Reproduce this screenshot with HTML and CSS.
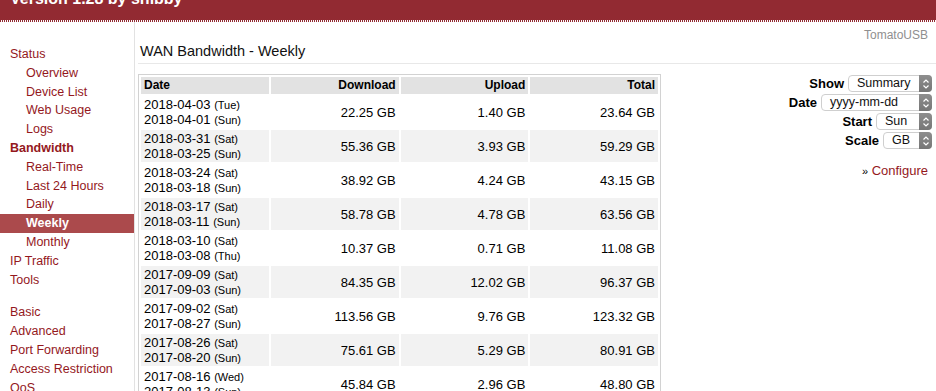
FILE: index.html
```html
<!DOCTYPE html>
<html>
<head>
  <meta charset="UTF-8" />
  <title>WAN Bandwidth - Weekly</title>
  <link rel="stylesheet" href="styles.css">
</head>
<body>
  <div class="header">
    <h1>Version 1.28 by shibby</h1>
  </div>
  <div class="dots"></div>

  <div class="page">
    <ul class="nav">
      <li class="top"><a href="#">Status</a></li>
      <li class="sub"><a href="#">Overview</a></li>
      <li class="sub"><a href="#">Device List</a></li>
      <li class="sub"><a href="#">Web Usage</a></li>
      <li class="sub"><a href="#">Logs</a></li>
      <li class="top open"><a href="#">Bandwidth</a></li>
      <li class="sub"><a href="#">Real-Time</a></li>
      <li class="sub"><a href="#">Last 24 Hours</a></li>
      <li class="sub"><a href="#">Daily</a></li>
      <li class="sub active"><a href="#">Weekly</a></li>
      <li class="sub"><a href="#">Monthly</a></li>
      <li class="top"><a href="#">IP Traffic</a></li>
      <li class="top"><a href="#">Tools</a></li>
      <li class="top spaced"><a href="#">Basic</a></li>
      <li class="top"><a href="#">Advanced</a></li>
      <li class="top"><a href="#">Port Forwarding</a></li>
      <li class="top"><a href="#">Access Restriction</a></li>
      <li class="top"><a href="#">QoS</a></li>
    </ul>

    <div class="main">
      <div class="brand">TomatoUSB</div>
      <div class="title">WAN Bandwidth - Weekly</div>

      <div class="content">
        <table class="bw">
          <tr class="head">
            <td class="date">Date</td>
            <td>Download</td>
            <td>Upload</td>
            <td>Total</td>
          </tr>
          <tr>
            <td class="date">2018-04-03 <small>(Tue)</small><br />2018-04-01 <small>(Sun)</small></td>
            <td>22.25 GB</td><td>1.40 GB</td><td>23.64 GB</td>
          </tr>
          <tr class="alt">
            <td class="date">2018-03-31 <small>(Sat)</small><br />2018-03-25 <small>(Sun)</small></td>
            <td>55.36 GB</td><td>3.93 GB</td><td>59.29 GB</td>
          </tr>
          <tr>
            <td class="date">2018-03-24 <small>(Sat)</small><br />2018-03-18 <small>(Sun)</small></td>
            <td>38.92 GB</td><td>4.24 GB</td><td>43.15 GB</td>
          </tr>
          <tr class="alt">
            <td class="date">2018-03-17 <small>(Sat)</small><br />2018-03-11 <small>(Sun)</small></td>
            <td>58.78 GB</td><td>4.78 GB</td><td>63.56 GB</td>
          </tr>
          <tr>
            <td class="date">2018-03-10 <small>(Sat)</small><br />2018-03-08 <small>(Thu)</small></td>
            <td>10.37 GB</td><td>0.71 GB</td><td>11.08 GB</td>
          </tr>
          <tr class="alt">
            <td class="date">2017-09-09 <small>(Sat)</small><br />2017-09-03 <small>(Sun)</small></td>
            <td>84.35 GB</td><td>12.02 GB</td><td>96.37 GB</td>
          </tr>
          <tr>
            <td class="date">2017-09-02 <small>(Sat)</small><br />2017-08-27 <small>(Sun)</small></td>
            <td>113.56 GB</td><td>9.76 GB</td><td>123.32 GB</td>
          </tr>
          <tr class="alt">
            <td class="date">2017-08-26 <small>(Sat)</small><br />2017-08-20 <small>(Sun)</small></td>
            <td>75.61 GB</td><td>5.29 GB</td><td>80.91 GB</td>
          </tr>
          <tr>
            <td class="date">2017-08-16 <small>(Wed)</small><br />2017-08-13 <small>(Sun)</small></td>
            <td>45.84 GB</td><td>2.96 GB</td><td>48.80 GB</td>
          </tr>
        </table>

        <div class="options">
          <div class="opt">
            <b>Show</b>
            <span class="select w-show">Summary<i class="step"><svg width="8" height="12" viewBox="0 0 8 12"><path d="M1.5 4.5 L4 2 L6.5 4.5 M1.5 7.5 L4 10 L6.5 7.5" fill="none" stroke="#fff" stroke-width="1.2"/></svg></i></span>
          </div>
          <div class="opt">
            <b>Date</b>
            <span class="select w-date">yyyy-mm-dd<i class="step"><svg width="8" height="12" viewBox="0 0 8 12"><path d="M1.5 4.5 L4 2 L6.5 4.5 M1.5 7.5 L4 10 L6.5 7.5" fill="none" stroke="#fff" stroke-width="1.2"/></svg></i></span>
          </div>
          <div class="opt">
            <b>Start</b>
            <span class="select w-start">Sun<i class="step"><svg width="8" height="12" viewBox="0 0 8 12"><path d="M1.5 4.5 L4 2 L6.5 4.5 M1.5 7.5 L4 10 L6.5 7.5" fill="none" stroke="#fff" stroke-width="1.2"/></svg></i></span>
          </div>
          <div class="opt">
            <b>Scale</b>
            <span class="select w-scale">GB<i class="step"><svg width="8" height="12" viewBox="0 0 8 12"><path d="M1.5 4.5 L4 2 L6.5 4.5 M1.5 7.5 L4 10 L6.5 7.5" fill="none" stroke="#fff" stroke-width="1.2"/></svg></i></span>
          </div>
          <div class="configure"><span class="raquo">&raquo;</span> <a href="#">Configure</a></div>
        </div>
      </div>
    </div>
  </div>
</body>
</html>
```

FILE: styles.css
```css
body {
  margin: 0;
  padding: 0;
  font-family: "Liberation Sans", Arial, sans-serif;
  font-size: 13px;
  color: #000;
  background-color: #fff;
  overflow: hidden;
}

.header {
  background-color: #922a32;
  height: 20px;
  overflow: hidden;
  padding-left: 10px;
}

.header h1 {
  margin: -12px 0 0 0;
  font-size: 16px;
  line-height: 22px;
  color: #fff;
  font-weight: bold;
}

.dots {
  height: 2px;
  background: repeating-linear-gradient(90deg, #922a32 0, #922a32 1px, #fff 1px, #fff 2px);
}

.page {
  display: flex;
  align-items: flex-start;
}

.nav {
  list-style: none;
  margin: 0;
  padding: 23px 0 0 0;
  width: 134px;
  border-right: 1px solid #e2e2e2;
  min-height: 400px;
  font-size: 12.5px;
}

.nav li {
  line-height: 18.8px;
  height: 18.8px;
}

.nav li a {
  display: block;
  text-decoration: none;
  color: #94181d;
}

.nav li.top a {
  padding-left: 10px;
}

.nav li.sub a {
  padding-left: 26px;
}

.nav li.open a {
  font-weight: bold;
}

.nav li.active a {
  background-color: #ab4a4c;
  color: #fff;
  font-weight: bold;
}

.nav li.spaced {
  margin-top: 14px;
}

.main {
  flex: 1;
  padding: 6px 0 0 3px;
}

.brand {
  text-align: right;
  font-size: 12px;
  line-height: 14px;
  color: #8f8f8f;
  padding-right: 8px;
}

.title {
  font-size: 14.5px;
  line-height: 18px;
  padding: 0 0 3px 2px;
  border-bottom: 1px solid #e8e8e8;
  color: #111;
}

.content {
  display: flex;
  justify-content: space-between;
  align-items: flex-start;
  margin-top: 10px;
}

.bw {
  width: 523px;
  border: 1px solid #d2d2d2;
  border-spacing: 2px;
  table-layout: fixed;
}

.bw td {
  text-align: right;
  padding: 1px 3px;
  line-height: 15px;
  height: 30px;
  font-size: 13px;
}

.bw td.date {
  text-align: left;
  width: 122px;
}

.bw small {
  font-size: 11px;
  line-height: 0;
}

.bw tr.head td {
  background-color: #e2e2e2;
  font-weight: bold;
  font-size: 12px;
  height: 15px;
  line-height: 15px;
}

.bw tr.alt td {
  background-color: #f2f2f2;
}

.options {
  margin-right: 4px;
  text-align: right;
}

.opt {
  display: flex;
  justify-content: flex-end;
  align-items: center;
  height: 19px;
  gap: 4px;
}

.opt b {
  font-size: 13px;
}

.select {
  position: relative;
  display: inline-block;
  box-sizing: border-box;
  height: 17px;
  line-height: 15px;
  border: 1px solid #cfcfcf;
  border-radius: 4px;
  background-color: #fff;
  font-size: 12.5px;
  text-align: left;
  padding-left: 8px;
  color: #111;
}

.select .step {
  position: absolute;
  top: -1px;
  right: -1px;
  width: 13px;
  height: 17px;
  border-radius: 0 4px 4px 0;
  background: linear-gradient(#8e8e8e, #767676);
  display: flex;
  align-items: center;
  justify-content: center;
}

.w-show { width: 84px; }
.w-date { width: 111px; }
.w-start { width: 56px; }
.w-scale { width: 49px; }

.configure {
  margin-top: 11px;
  line-height: 19px;
  padding-right: 4px;
}

.configure .raquo {
  font-size: 11px;
}

.configure a {
  color: #94181d;
  text-decoration: none;
}
```
